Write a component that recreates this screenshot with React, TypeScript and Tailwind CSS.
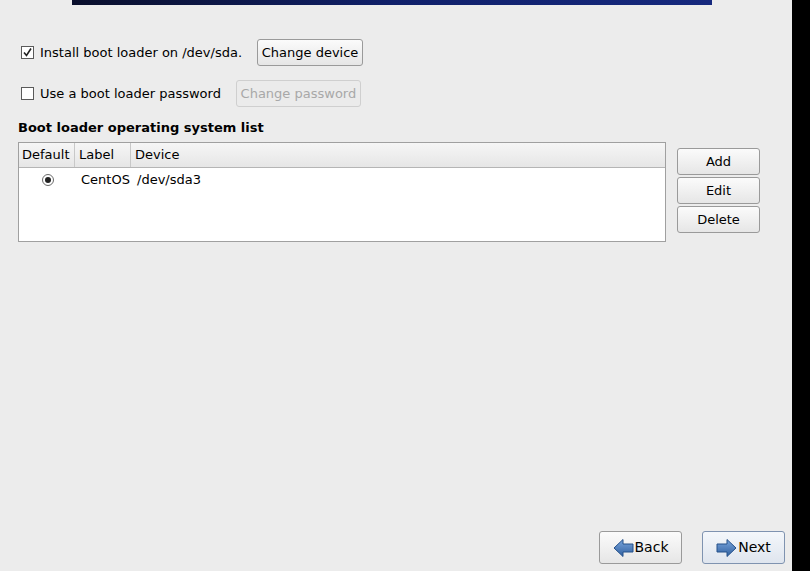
import React from "react";

const font = { fontFamily: '"DejaVu Sans", sans-serif' };

const GtkButton = ({
  label,
  disabled,
  className,
}: {
  label: string;
  disabled?: boolean;
  className?: string;
}) => {
  return (
    <div
      className={`flex items-center justify-center rounded-[3px] border text-[13px] ${
        disabled
          ? "border-[#cfcfcf] bg-[#ebebeb] text-[#a8a8a8]"
          : "border-[#9a9a9a] bg-gradient-to-b from-[#fbfbfb] to-[#e6e6e6] text-black"
      } ${className ?? ""}`}
    >
      {label}
    </div>
  );
};

const CheckBox = ({ checked }: { checked?: boolean }) => {
  return (
    <div className="w-[13px] h-[13px] border border-[#5a5a5a] bg-white flex items-center justify-center">
      {checked && (
        <svg width="11" height="11" viewBox="0 0 11 11">
          <path d="M2 5.5 L4.5 8.5 L9 1.5" stroke="#222" strokeWidth="1.6" fill="none" />
        </svg>
      )}
    </div>
  );
};

const Arrow = ({ dir }: { dir: "left" | "right" }) => {
  const d =
    dir === "left"
      ? "M1 9 L10 0.5 L10 5 L20 5 L20 13 L10 13 L10 17.5 Z"
      : "M20 9 L11 0.5 L11 5 L1 5 L1 13 L11 13 L11 17.5 Z";
  return (
    <svg width="21" height="18" viewBox="0 0 21 18">
      <defs>
        <linearGradient id={`g-${dir}`} x1="0" y1="0" x2="0" y2="1">
          <stop offset="0" stopColor="#7aa6dd" />
          <stop offset="1" stopColor="#2f5f9f" />
        </linearGradient>
      </defs>
      <path d={d} fill={`url(#g-${dir})`} stroke="#24508a" strokeWidth="1" strokeLinejoin="round" />
    </svg>
  );
};

const SideButton = ({ label }: { label: string }) => (
  <GtkButton label={label} className="w-[83px] h-[27px]" />
);

export default function App() {
  return (
    <div className="w-[810px] h-[571px] flex bg-black overflow-hidden" style={font}>
      <div className="w-[792px] h-full bg-[#ececec] flex flex-col text-black">
        <div className="pl-[72px]">
          <div className="w-[640px] h-[5px] bg-gradient-to-r from-[#0a0f2c] via-[#10206a] to-[#16297e]" />
        </div>

        <div className="mt-[34px] pl-[21px] flex items-center h-[27px]">
          <CheckBox checked />
          <span className="ml-[6px] text-[13px]">Install boot loader on /dev/sda.</span>
          <GtkButton label="Change device" className="ml-[15px] w-[106px] h-[27px]" />
        </div>

        <div className="mt-[14px] pl-[21px] flex items-center h-[27px]">
          <CheckBox />
          <span className="ml-[6px] text-[13px]">Use a boot loader password</span>
          <GtkButton label="Change password" disabled className="ml-[15px] w-[125px] h-[27px]" />
        </div>

        <div className="mt-[12px] pl-[18px] text-[13px] font-bold leading-[18px]">
          Boot loader operating system list
        </div>

        <div className="mt-[5px] pl-[18px] flex">
          <div className="w-[648px] h-[100px] border border-[#a0a0a0] bg-white flex flex-col">
            <div className="h-[25px] flex items-center text-[13px] border-b border-[#b5b5b5] bg-gradient-to-b from-[#f6f6f6] to-[#e6e6e6]">
              <div className="w-[56px] h-full flex items-center pl-[3px] border-r border-[#c8c8c8]">Default</div>
              <div className="w-[56px] h-full flex items-center pl-[4px] border-r border-[#c8c8c8]">Label</div>
              <div className="flex-1 h-full flex items-center pl-[4px]">Device</div>
            </div>
            <div className="h-[24px] flex items-center text-[13px]">
              <div className="w-[58px] flex justify-center">
                <div className="w-[12px] h-[12px] rounded-full border border-[#6a6a6a] bg-white flex items-center justify-center">
                  <div className="w-[6px] h-[6px] rounded-full bg-[#222]" />
                </div>
              </div>
              <div className="w-[60px] pl-[4px]">CentOS</div>
              <div>/dev/sda3</div>
            </div>
          </div>
          <div className="ml-[11px] mt-[6px] flex flex-col gap-[2px]">
            <SideButton label="Add" />
            <SideButton label="Edit" />
            <SideButton label="Delete" />
          </div>
        </div>

        <div className="flex-1" />

        <div className="flex justify-end gap-[20px] pr-[7px] pb-[7px]">
          <div className="w-[83px] h-[33px] rounded-[3px] border border-[#9a9a9a] bg-gradient-to-b from-[#fbfbfb] to-[#e6e6e6] flex items-center justify-center gap-[1px] text-[14px]">
            <Arrow dir="left" />
            <span>Back</span>
          </div>
          <div className="w-[83px] h-[33px] rounded-[3px] border border-[#7f93b0] bg-gradient-to-b from-[#f4f7fb] to-[#dfe5ee] flex items-center justify-center gap-[1px] text-[14px]">
            <Arrow dir="right" />
            <span>Next</span>
          </div>
        </div>
      </div>
    </div>
  );
}
